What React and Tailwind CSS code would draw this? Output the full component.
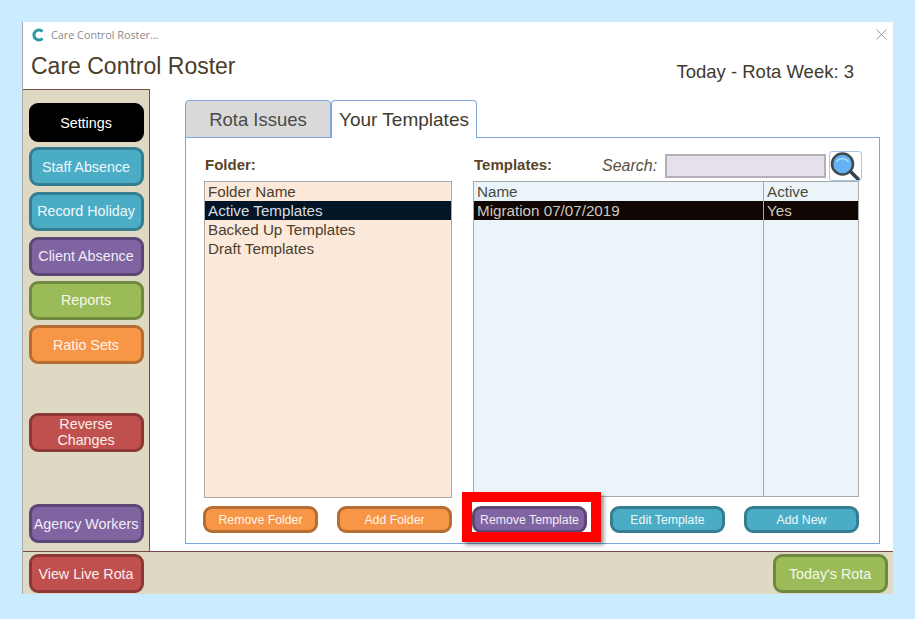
const SIDE_COLORS = {
  black: 'bg-black border-black text-white',
  teal: 'bg-[#4bacc6] border-[#357d91] text-[#eef8fb]',
  purple: 'bg-[#8064a2] border-[#5c4776] text-[#f1ecf6]',
  green: 'bg-[#9bbb59] border-[#71893f] text-[#f4f8ea]',
  orange: 'bg-[#f79646] border-[#b66d31] text-[#fff5ec]',
  red: 'bg-[#c0504d] border-[#8c3836] text-[#fbeeee]',
};

function SideButton({ color, className = '', children }) {
  return (
    <div className={`w-[115px] h-[39px] shrink-0 flex items-center justify-center text-center rounded-[9px] border-[3px] text-[14.3px] leading-[16px] pr-px ${SIDE_COLORS[color]} ${className}`}>
      {children}
    </div>
  );
}

function ActionButton({ color, className = '', children }) {
  return (
    <div className={`w-[115px] h-[27px] shrink-0 flex items-center justify-center rounded-[9px] border-[3px] text-[12.3px] pt-px ${SIDE_COLORS[color]} ${className}`}>
      {children}
    </div>
  );
}

function SearchIcon() {
  return (
    <svg width="31" height="28" viewBox="0 0 31 28" className="shrink-0">
      <line x1="20" y1="19" x2="28" y2="27" stroke="#33424a" strokeWidth="3.5" strokeLinecap="round" />
      <circle cx="12.5" cy="12" r="10.5" fill="#66b2f4" stroke="#3d4a4d" strokeWidth="2.5" />
      <path d="M6.5 10 A7 7 0 0 1 18.5 10" fill="none" stroke="#b7e0fb" strokeWidth="1.2" />
    </svg>
  );
}

function LogoIcon() {
  return (
    <svg width="12" height="14" viewBox="0 0 12 14">
      <path d="M10.5 3.5 A5 5 0 1 0 10.5 10.5" fill="none" stroke="#2b9aa3" strokeWidth="3" />
    </svg>
  );
}

function CloseIcon() {
  return (
    <svg width="11" height="11" viewBox="0 0 11 11">
      <path d="M0.5 0.5 L10.5 10.5 M10.5 0.5 L0.5 10.5" stroke="#9a9a9a" strokeWidth="1" />
    </svg>
  );
}

const FOLDERS = ['Backed Up Templates', 'Draft Templates'];

export default function App() {
  return (
    <div className="w-[915px] h-[619px] bg-[#cbecff] pt-[22px] pl-[22px] font-['Liberation_Sans',sans-serif] overflow-hidden">
      <div className="relative w-[871px] h-[572px] bg-white flex flex-col border-l border-[#a9a9a9]">
        {/* title bar */}
        <div className="h-[67px] shrink-0 relative">
          <div className="flex items-center gap-[7px] pl-[9px] pt-[1px] h-[25px]">
            <LogoIcon />
            <span className="font-['Open_Sans',sans-serif] text-[10.8px] text-[#8a8a8a]">Care Control Roster...</span>
          </div>
          <div className="flex items-start justify-between pl-[8px] pr-[39px]">
            <span className="text-[23px] leading-[30px] text-[#4a3c28] mt-[4px]">Care Control Roster</span>
            <span className="text-[18.5px] leading-[22px] text-[#403a30] mt-[14px]">Today - Rota Week: 3</span>
          </div>
          <span className="absolute right-[6px] top-[7px] flex">
            <CloseIcon />
          </span>
        </div>

        <div className="flex-1 flex min-h-0">
          {/* side menu */}
          <div className="w-[127px] shrink-0 bg-[#ddd9c3] border-t border-r border-[#7a4a4a] flex flex-col pl-[6px] pt-[13px]">
            <SideButton color="black">Settings</SideButton>
            <SideButton color="teal" className="mt-[5px]">Staff Absence</SideButton>
            <SideButton color="teal" className="mt-[6px] pb-[2px]">Record Holiday</SideButton>
            <SideButton color="purple" className="mt-[6px] pb-[2px]">Client Absence</SideButton>
            <SideButton color="green" className="mt-[5px] pb-[2px]">Reports</SideButton>
            <SideButton color="orange" className="mt-[5px]">Ratio Sets</SideButton>
            <SideButton color="red" className="mt-[49px] pb-[2px]">Reverse<br />Changes</SideButton>
            <SideButton color="purple" className="mt-[52px]">Agency Workers</SideButton>
          </div>

          {/* main area */}
          <div className="flex-1 pl-[35px] pt-[10px] border-t border-white">
            <div className="flex h-[38px] relative z-10">
              <div className="w-[146px] h-[38px] bg-[#d9d9d9] border border-[#7fa7de] rounded-t-[4px] flex items-center justify-center text-[18.5px] pt-px text-[#4a4a4a]">Rota Issues</div>
              <div className="w-[146px] h-[38px] bg-white border border-b-0 border-[#7fa7de] rounded-t-[4px] flex items-center justify-center text-[19px] pt-px text-[#403a30]">Your Templates</div>
            </div>
            <div className="w-[695px] h-[407px] -mt-px border border-[#7fa7de] pl-[17px] pr-[18px] flex flex-col">
              <div className="flex-1 flex min-h-0 gap-[21px] pl-px">
                {/* folders */}
                <div className="w-[248px] shrink-0">
                  <div className="h-[43px] pt-[17px] pl-px text-[15px] leading-[20px] font-bold text-[#5a4526]">Folder:</div>
                  <div className="h-[317px] bg-[#fde9d9] border border-[#a9a9a9] text-[15.2px] leading-[19px] text-[#4a4030]">
                    <div className="pl-[3px] h-[19px]">Folder Name</div>
                    <div className="pl-[3px] h-[19px] bg-[#021526] text-[#d8dde2]">Active Templates</div>
                    {FOLDERS.map(f => (
                      <div key={f} className="pl-[3px] h-[19px]">{f}</div>
                    ))}
                  </div>
                </div>

                {/* templates */}
                <div className="w-[386px] shrink-0">
                  <div className="h-[43px] flex items-start">
                    <span className="shrink-0 pt-[17px] text-[15px] leading-[20px] font-bold text-[#5a4526] w-[129px] pl-px">Templates:</span>
                    <span className="shrink-0 pt-[18px] text-[16px] leading-[20px] italic text-[#5a5040] w-[63px]">Search:</span>
                    <div className="shrink-0 mt-[16px] w-[161px] h-[24px] bg-[#e6e0ec] border-2 border-[#b5b0b8]" />
                    <div className="shrink-0 ml-[3px] mt-[13px] w-[33px] h-[30px] rounded-[3px] border border-[#a9c6ee] bg-white flex items-center justify-center relative z-10">
                      <SearchIcon />
                    </div>
                  </div>
                  <div className="h-[316px] bg-[#ebf5f9] border border-[#a9a9a9] text-[15.2px] leading-[19px] text-[#4a4a40] flex">
                    <div className="w-[290px] border-r border-[#a9a9a9]">
                      <div className="pl-[3px] h-[19px]">Name</div>
                      <div className="pl-[3px] h-[19px] bg-[#100604] text-[#cfc8c0]">Migration 07/07/2019</div>
                    </div>
                    <div className="flex-1">
                      <div className="pl-[3px] h-[19px]">Active</div>
                      <div className="pl-[3px] h-[19px] bg-[#100604] text-[#cfc8c0]">Yes</div>
                    </div>
                  </div>
                </div>
              </div>

              {/* action buttons */}
              <div className="h-[46px] shrink-0 flex items-start pt-[9px]">
                <ActionButton color="orange">Remove Folder</ActionButton>
                <ActionButton color="orange" className="ml-[19px]">Add Folder</ActionButton>
                <ActionButton color="purple" className="ml-[20px]">Remove Template</ActionButton>
                <ActionButton color="teal" className="ml-[23px]">Edit Template</ActionButton>
                <ActionButton color="teal" className="ml-[19px]">Add New</ActionButton>
              </div>
            </div>
          </div>
        </div>

        {/* bottom bar */}
        <div className="h-[43px] shrink-0 bg-[#ddd9c3] border-t border-[#7a4a4a] flex items-start justify-between pt-[2px] pl-[6px] pr-[5px]">
          <SideButton color="red">View Live Rota</SideButton>
          <SideButton color="green">Today's Rota</SideButton>
        </div>

        {/* red annotation box */}
        <div className="absolute left-[439px] top-[470px] w-[139px] h-[50px] border-[10px] border-[#ff0000] shadow-[3px_3px_4px_rgba(0,0,0,0.4)]" />
      </div>
    </div>
  );
}
